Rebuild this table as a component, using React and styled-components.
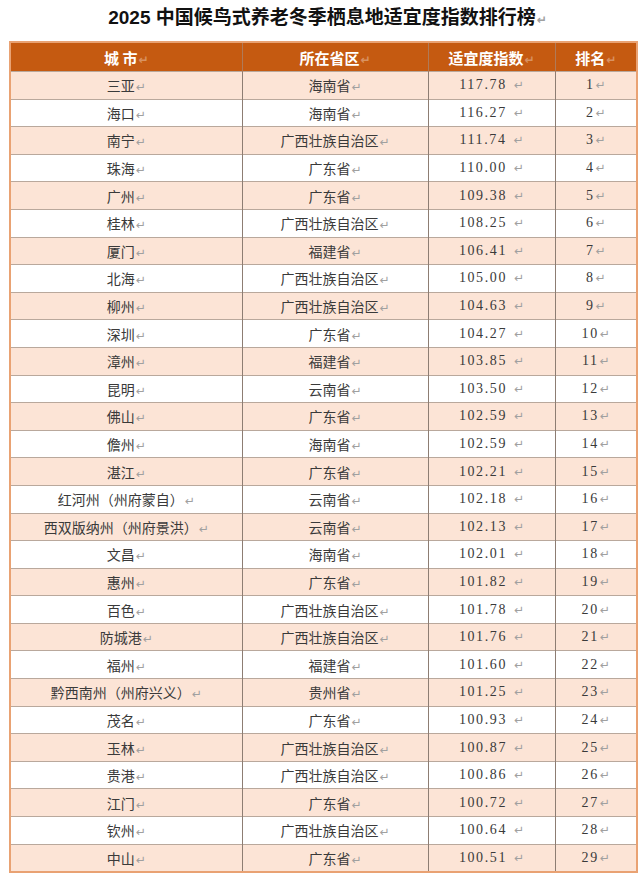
import React from 'react';
import styled, { createGlobalStyle } from 'styled-components';

const GlobalStyle = createGlobalStyle`
  html, body {
    margin: 0;
    padding: 0;
    background: #ffffff;
  }
`;

const Page = styled.div`
  width: 640px;
  padding: 0 0 0 9px;
  box-sizing: border-box;
`;

const Title = styled.h1`
  margin: 0;
  height: 41px;
  line-height: 36px;
  padding-left: 6px;
  text-align: center;
  font-family: "Liberation Sans", "Noto Sans CJK SC", sans-serif;
  font-size: 19px;
  font-weight: 700;
  color: #111111;
`;

const Table = styled.table`
  width: 627px;
  border-collapse: collapse;
  table-layout: fixed;
  border: 2px solid #e9a273;
`;

const HeadCell = styled.th`
  height: 28px;
  padding: 0;
  background: #c55a11;
  color: #ffffff;
  font-family: "Noto Sans CJK SC", sans-serif;
  font-size: 15px;
  font-weight: 700;
  text-align: center;
  border-left: 1px solid #b07a58;
  &:first-child {
    border-left: none;
  }
`;

const Row = styled.tr`
  height: 27.6px;
  background: ${(p) => (p.$odd ? '#fce4d6' : '#ffffff')};
`;

const Cell = styled.td`
  padding: 0;
  text-align: center;
  color: #3a3a3a;
  font-family: ${(p) =>
    p.$num ? '"Liberation Serif", serif' : '"Noto Sans CJK SC", sans-serif'};
  font-size: 14px;
  letter-spacing: ${(p) => (p.$num ? '1.6px' : '0')};
  border-top: 1px solid #b9a89c;
  border-left: 1px solid #8d7d73;
  white-space: nowrap;
  &:first-child {
    border-left: none;
  }
`;

const Mark = styled.span`
  font-family: "DejaVu Sans", sans-serif;
  font-size: 12px;
  letter-spacing: 0;
  color: ${(p) => (p.$light ? 'rgba(255,255,255,0.35)' : '#a0a0a0')};
  margin-left: ${(p) => (p.$gap ? '7px' : '1px')};
`;

const rows = [
  ['三亚', '海南省', '117.78'],
  ['海口', '海南省', '116.27'],
  ['南宁', '广西壮族自治区', '111.74'],
  ['珠海', '广东省', '110.00'],
  ['广州', '广东省', '109.38'],
  ['桂林', '广西壮族自治区', '108.25'],
  ['厦门', '福建省', '106.41'],
  ['北海', '广西壮族自治区', '105.00'],
  ['柳州', '广西壮族自治区', '104.63'],
  ['深圳', '广东省', '104.27'],
  ['漳州', '福建省', '103.85'],
  ['昆明', '云南省', '103.50'],
  ['佛山', '广东省', '102.59'],
  ['儋州', '海南省', '102.59'],
  ['湛江', '广东省', '102.21'],
  ['红河州（州府蒙自）', '云南省', '102.18'],
  ['西双版纳州（州府景洪）', '云南省', '102.13'],
  ['文昌', '海南省', '102.01'],
  ['惠州', '广东省', '101.82'],
  ['百色', '广西壮族自治区', '101.78'],
  ['防城港', '广西壮族自治区', '101.76'],
  ['福州', '福建省', '101.60'],
  ['黔西南州（州府兴义）', '贵州省', '101.25'],
  ['茂名', '广东省', '100.93'],
  ['玉林', '广西壮族自治区', '100.87'],
  ['贵港', '广西壮族自治区', '100.86'],
  ['江门', '广东省', '100.72'],
  ['钦州', '广西壮族自治区', '100.64'],
  ['中山', '广东省', '100.51'],
];

const App = () => {
  return (
    <Page>
      <GlobalStyle />
      <Title>
        2025 中国候鸟式养老冬季栖息地适宜度指数排行榜
        <Mark>↵</Mark>
      </Title>
      <Table>
        <colgroup>
          <col style={{ width: 232 }} />
          <col style={{ width: 186 }} />
          <col style={{ width: 127 }} />
          <col style={{ width: 82 }} />
        </colgroup>
        <thead>
          <tr>
            <HeadCell>城 市<Mark $light>↵</Mark></HeadCell>
            <HeadCell>所在省区<Mark $light>↵</Mark></HeadCell>
            <HeadCell>适宜度指数<Mark $light>↵</Mark></HeadCell>
            <HeadCell>排名<Mark $light>↵</Mark></HeadCell>
          </tr>
        </thead>
        <tbody>
          {rows.map(([city, prov, score], i) => (
            <Row key={city} $odd={i % 2 === 0}>
              <Cell>{city}<Mark>↵</Mark></Cell>
              <Cell>{prov}<Mark>↵</Mark></Cell>
              <Cell $num>{score}<Mark $gap>↵</Mark></Cell>
              <Cell $num>{i + 1}<Mark>↵</Mark></Cell>
            </Row>
          ))}
        </tbody>
      </Table>
    </Page>
  );
};

export default App;
